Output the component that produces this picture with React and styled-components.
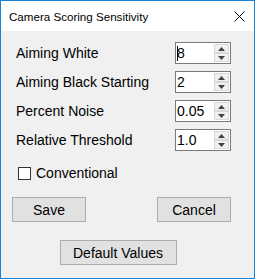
import React from 'react';
import styled, { createGlobalStyle } from 'styled-components';

const Global = createGlobalStyle`
  html, body { margin: 0; padding: 0; background: #ffffff; }
  * { box-sizing: border-box; }
`;

const Window = styled.div`
  width: 255px;
  height: 279px;
  border: 1px solid #1883d7;
  display: flex;
  flex-direction: column;
  font-family: "Liberation Sans", Arial, sans-serif;
  color: #000;
`;

const TitleBar = styled.div`
  height: 30px;
  background: #fff;
  display: flex;
  align-items: center;
  justify-content: space-between;
  padding: 0 9px 0 8px;
`;

const Title = styled.span`
  font-size: 11.6px;
`;

const Body = styled.div`
  flex: 1;
  background: #f0f0f0;
  padding: 11px 23px 0 15px;
  display: flex;
  flex-direction: column;
`;

const Fields = styled.div`
  display: grid;
  grid-template-columns: 1fr 56px;
  row-gap: 7px;
`;

const Label = styled.label`
  font-size: 14px;
  display: flex;
  align-items: center;
  height: 22px;
`;

const Spin = styled.div`
  height: 22px;
  background: #fff;
  border: 1px solid #7a7a7a;
  display: flex;
  align-items: stretch;
`;

const Value = styled.div`
  flex: 1;
  font-size: 14px;
  display: flex;
  align-items: center;
  padding-left: 1px;
`;

const Caret = styled.span`
  display: inline-block;
  width: 1px;
  height: 15px;
  background: #000;
  margin-right: -1px;
`;

const Arrows = styled.div`
  width: 16px;
  display: flex;
  flex-direction: column;
  padding: 1px 1px 1px 0;
`;

const ArrowBtn = styled.div`
  flex: 1;
  background: #f0f0f0;
  border: 1px solid #d9d9d9;
  display: flex;
  align-items: center;
  justify-content: center;
`;

const CheckRow = styled.div`
  display: flex;
  align-items: center;
  gap: 5px;
  margin-top: 14px;
  padding-left: 2px;
  font-size: 14px;
`;

const Box = styled.span`
  width: 13px;
  height: 13px;
  border: 1px solid #333;
  background: #fff;
`;

const ButtonRow = styled.div`
  display: flex;
  justify-content: space-between;
  margin: 16px 0 0 -4px;
`;

const Button = styled.div`
  width: ${p => p.$w}px;
  height: 25px;
  background: #e1e1e1;
  border: 1px solid #adadad;
  font-size: 14px;
  display: flex;
  align-items: center;
  justify-content: center;
`;

const Center = styled.div`
  display: flex;
  justify-content: center;
  margin-top: 18px;
  padding-right: 11px;
`;

const Tri = ({ down }) => (
  <svg width="7" height="4" viewBox="0 0 7 4">
    <path d={down ? 'M0 0H7L3.5 4Z' : 'M0 4H7L3.5 0Z'} fill="#404040" />
  </svg>
);

const Field = ({ label, value, caret }) => (
  <>
    <Label>{label}</Label>
    <Spin>
      <Value>{caret && <Caret />}{value}</Value>
      <Arrows>
        <ArrowBtn><Tri /></ArrowBtn>
        <ArrowBtn><Tri down /></ArrowBtn>
      </Arrows>
    </Spin>
  </>
);

export default function App() {
  return (
    <Window>
      <Global />
      <TitleBar>
        <Title>Camera Scoring Sensitivity</Title>
        <svg width="11" height="11" viewBox="0 0 11 11">
          <path d="M0.5 0.5L10.5 10.5M10.5 0.5L0.5 10.5" stroke="#000" strokeWidth="1" />
        </svg>
      </TitleBar>
      <Body>
        <Fields>
          <Field label="Aiming White" value="8" caret />
          <Field label="Aiming Black Starting" value="2" />
          <Field label="Percent Noise" value="0.05" />
          <Field label="Relative Threshold" value="1.0" />
        </Fields>
        <CheckRow>
          <Box />
          Conventional
        </CheckRow>
        <ButtonRow>
          <Button $w={74}>Save</Button>
          <Button $w={74}>Cancel</Button>
        </ButtonRow>
        <Center>
          <Button $w={117}>Default Values</Button>
        </Center>
      </Body>
    </Window>
  );
}
